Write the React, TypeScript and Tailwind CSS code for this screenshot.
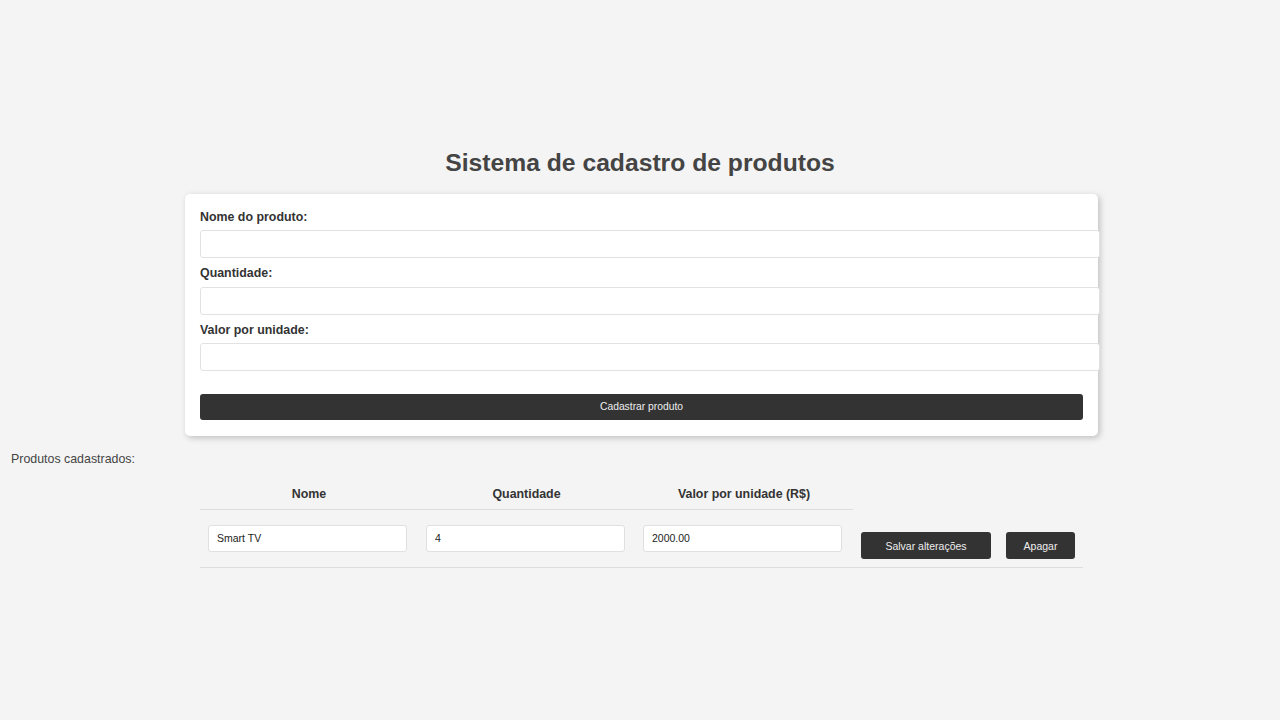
import React from "react";

export default function App() {
  const inputCls =
    "block w-[900px] h-[28px] bg-white border border-[#e2e2e2] rounded-[3px] px-2 text-[13px] outline-none";
  const labelCls = "block h-[15px] text-[12.4px] leading-[17px] font-bold text-[#333]";
  const cellInput =
    "block w-[199px] h-[27px] bg-white border border-[#e0e0e0] rounded-[3px] px-2 text-[10.5px] text-[#222] outline-none";
  const thCls =
    "border-b border-[#ddd] text-[12.4px] font-bold text-[#333] align-middle pt-[4px]";
  return (
    <div
      className="min-h-[720px] w-[1280px] bg-[#f4f4f4] text-[#333]"
      style={{ fontFamily: '"Liberation Sans", Arial, sans-serif' }}
    >
      <div className="pt-[144px]">
        <h1 className="text-center text-[24.7px] leading-[38px] font-bold text-[#444]">
          Sistema de cadastro de produtos
        </h1>
        <div className="ml-[185px] mt-3 w-[913px] bg-white rounded-[5px] shadow-[2px_2px_6px_rgba(0,0,0,0.22)] px-[15px] pt-[15px] pb-4">
          <label className={labelCls}>Nome do produto:</label>
          <input className={inputCls + " mt-[6px]"} />
          <label className={labelCls + " mt-[7px]"}>Quantidade:</label>
          <input className={inputCls + " mt-[7px]"} />
          <label className={labelCls + " mt-[7px]"}>Valor por unidade:</label>
          <input className={inputCls + " mt-[6px]"} />
          <button className="mt-[23px] block w-[883px] h-[26px] bg-[#333] rounded-[3px] text-[10.3px] text-[#eee]">
            Cadastrar produto
          </button>
        </div>
        <p className="mt-[16px] ml-[11px] text-[12.4px] leading-[15px] text-[#444]">
          Produtos cadastrados:
        </p>
        <table className="ml-[200px] mt-[10px] w-[883px] border-collapse">
          <thead>
            <tr className="h-[32px]">
              <th className={thCls + " w-[218px]"}>Nome</th>
              <th className={thCls + " w-[217px]"}>Quantidade</th>
              <th className={thCls + " w-[218px]"}>Valor por unidade (R$)</th>
              <th className="w-[145px]"></th>
              <th className="w-[85px]"></th>
            </tr>
          </thead>
          <tbody>
            <tr className="h-[58px] border-b border-[#ddd]">
              <td className="pl-2 align-middle">
                <input className={cellInput} defaultValue="Smart TV" />
              </td>
              <td className="pl-2 align-middle">
                <input className={cellInput} defaultValue="4" />
              </td>
              <td className="pl-2 align-middle">
                <input className={cellInput} defaultValue="2000.00" />
              </td>
              <td className="pl-2 align-middle">
                <button className="mt-4 w-[130px] h-[27px] pt-[3px] bg-[#333] rounded-[3px] text-[10.5px] text-[#eee]">
                  Salvar alterações
                </button>
              </td>
              <td className="pl-2 align-middle">
                <button className="mt-4 w-[69px] h-[27px] pt-[3px] bg-[#333] rounded-[3px] text-[10.5px] text-[#eee]">
                  Apagar
                </button>
              </td>
            </tr>
          </tbody>
        </table>
      </div>
    </div>
  );
}
